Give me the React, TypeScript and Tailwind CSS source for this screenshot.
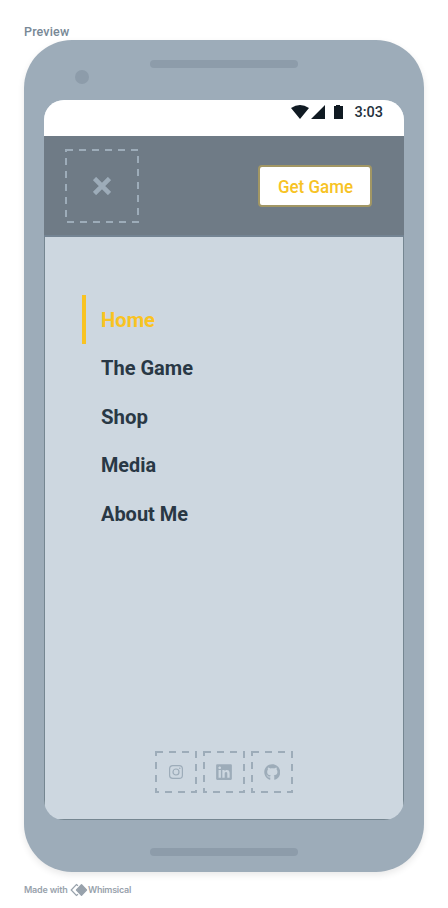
import React from "react";
import { FaLinkedin, FaGithub } from "react-icons/fa";

function Dashed({ size, children }: { size: number; children: React.ReactNode }) {
  const e = size - 1;
  return (
    <div className="relative flex items-center justify-center text-[#9dacb9]" style={{ width: size, height: size }}>
      <svg className="absolute inset-0" width={size} height={size} fill="none">
        <path d={`M1 1H${e}V${e}H1Z`} stroke="currentColor" strokeWidth="2" strokeDasharray="7 6" />
      </svg>
      {children}
    </div>
  );
}

const items = [
  { label: "Home", width: 54 },
  { label: "The Game", width: 92 },
  { label: "Shop", width: 47 },
  { label: "Media", width: 55 },
  { label: "About Me", width: 87 },
];

function Fit({ children, width }: { children: string; width: number }) {
  return (
    <svg width={width} height="28" className="block overflow-visible" fill="currentColor">
      <text x="0" y="21" textLength={width} lengthAdjust="spacingAndGlyphs">{children}</text>
    </svg>
  );
}

export default function App() {
  return (
    <div className="h-[908px] w-[448px] overflow-hidden bg-white px-6 pt-6 font-['Roboto',sans-serif]">
      <div className="h-4 text-[12.5px] leading-4 font-medium tracking-[0.15px] text-[#788896]">Preview</div>
      <div className="relative h-[832px] w-[400px] rounded-[48px] bg-[#9dacb9] px-5 shadow-[0_3px_7px_rgba(0,0,0,0.09)]">
        <div className="absolute top-[30px] left-[51px] size-[14px] rounded-full bg-[#8d9caa]" />
        <div className="flex h-[60px] justify-center pt-5">
          <div className="h-2 w-[148px] rounded-full bg-[#8d9caa]" />
        </div>
        <div className="flex h-[720px] flex-col overflow-hidden rounded-[20px] bg-[#cdd7e0]">
          <div className="flex h-9 shrink-0 bg-white pt-[5px] pl-[247px] text-[#101a22]">
            <svg width="52" height="15" fill="currentColor">
              <path d="M0 3Q9 -3 18 3L9 14Z M34 0V14H20Z M43 1H45V0H49V1H52V14H43Z" />
            </svg>
            <div className="ml-[11.5px] text-[14.5px] leading-[15px] font-medium text-[#25313d]">3:03</div>
          </div>
          <div className="flex h-[101px] shrink-0 justify-between border-b-2 border-[#748493] bg-[#6f7b86] pt-[13px] pr-8 pl-[21px]">
            <Dashed size={74}>
              <svg width="18" height="18" stroke="currentColor" strokeWidth="4.6">
                <path d="M1.5 1.5L16.5 16.5M16.5 1.5L1.5 16.5" />
              </svg>
            </Dashed>
            <button className="mt-4 flex h-[42px] w-[114px] items-center justify-center rounded-[4px] border-2 border-[#a29764] bg-white text-[17.5px] font-medium text-[#f7c325]">
              <Fit width={75}>Get Game</Fit>
            </button>
          </div>
          <div className="flex flex-1 flex-col items-center border-x border-b border-[#758691] pt-[58px]">
            <nav className="w-full pl-[37px]">
              {items.map((item, i) => (
                <div key={item.label} className={"flex h-[48.5px] items-center border-l-4 pt-px pl-[15px] text-[21px] font-bold " + (i === 0 ? "border-[#f9c322] text-[#f9c322]" : "border-transparent text-[#293845]")}>
                  <Fit width={item.width}>{item.label}</Fit>
                </div>
              ))}
            </nav>
            <div className="mt-auto mb-[26px] flex gap-1.5">
              <Dashed size={42}>
                <svg width="14" height="14" fill="none" stroke="currentColor" strokeWidth="1.2">
                  <rect x=".6" y=".6" width="12.8" height="12.8" rx="3.2" />
                  <circle cx="7" cy="7" r="3" />
                  <circle cx="10.8" cy="3.2" r=".8" fill="currentColor" stroke="none" />
                </svg>
              </Dashed>
              <Dashed size={42}><FaLinkedin className="h-[18px] w-[16px]" /></Dashed>
              <Dashed size={42}><FaGithub className="size-[16.5px]" /></Dashed>
            </div>
          </div>
        </div>
        <div className="mx-auto mt-7 h-2 w-[148px] rounded-full bg-[#8d9caa]" />
      </div>
      <div className="mt-3 flex h-3 items-center font-['Inter',sans-serif] text-[9px] leading-3 font-semibold text-[#98a2ac]">
        <span className="w-[46px] shrink-0 tracking-[-0.2px]">Made with</span>
        <svg width="18" height="12" fill="currentColor" className="overflow-visible">
          <path d="M11.5 .8L16.5 6L11.5 11.2L6.5 6Z" strokeWidth="1.4" stroke="currentColor" strokeLinejoin="round" />
          <path d="M8 1.8L6.4 .5L1.2 6L6.4 11.5L8 10.2" fill="none" stroke="currentColor" strokeWidth="1.2" />
        </svg>
        <span className="tracking-[-0.25px]">Whimsical</span>
      </div>
    </div>
  );
}
